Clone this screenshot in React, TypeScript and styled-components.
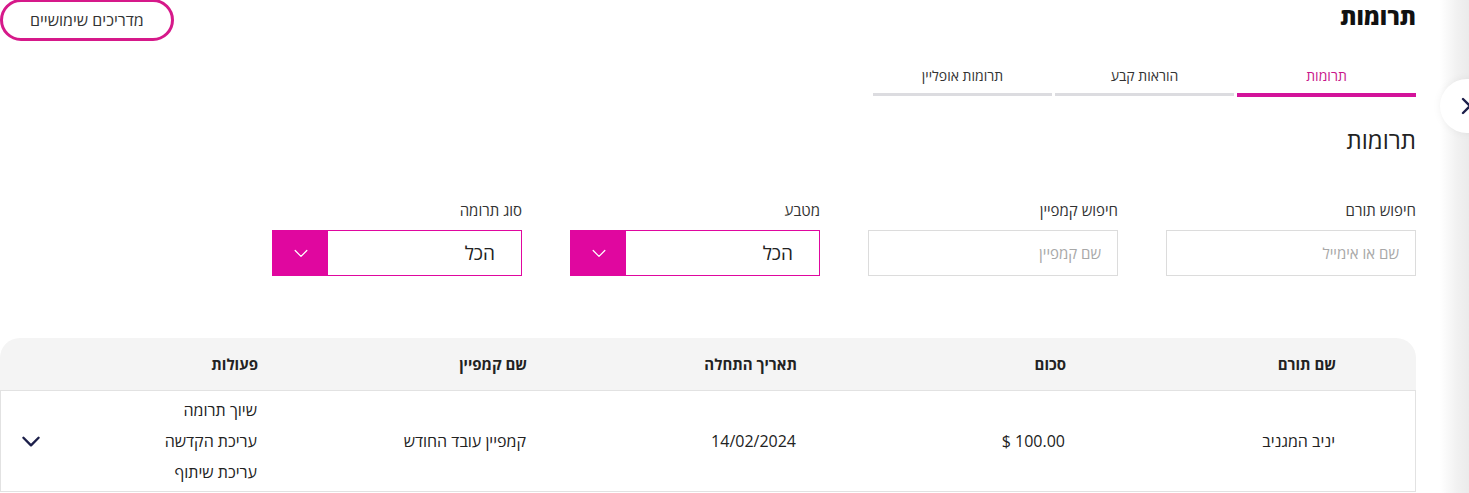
import React from "react";
import styled, { createGlobalStyle } from "styled-components";

const GlobalStyle = createGlobalStyle`
  body {
    margin: 0;
    background: #fff;
    font-family: "Open Sans", "Liberation Sans", "DejaVu Sans", sans-serif;
    color: #222;
  }
`;

const MAGENTA = "#e0079f";

const Page = styled.div`
  display: flex;
  direction: ltr;
  width: 1469px;
  height: 493px;
  overflow: hidden;
  position: relative;
`;

const Main = styled.main`
  direction: rtl;
  width: 1416px;
  margin-right: 24px;
  flex-shrink: 0;
`;

const SideEdge = styled.aside`
  flex: 1;
  background: linear-gradient(to right, #ffffff 0%, #f1f1f1 60%, #ebebeb 100%);
`;

const ToggleButton = styled.button`
  position: absolute;
  top: 79px;
  left: 1440px;
  width: 54px;
  height: 54px;
  border-radius: 50%;
  border: none;
  background: #fff;
  box-shadow: 0 0 8px rgba(0, 0, 0, 0.06);
  display: flex;
  align-items: center;
  padding: 0 0 0 20px;
  color: #1c1f4a;
`;

const Header = styled.header`
  display: flex;
  justify-content: space-between;
  align-items: flex-start;
  height: 42px;
`;

const Title = styled.h1`
  margin: 0;
  font-size: 23px;
  font-weight: 800;
  color: #111;
`;

const GuideButton = styled.button`
  height: 42px;
  margin-top: -1px;
  padding: 0 27px;
  border: 3px solid #d6198a;
  border-radius: 22px;
  background: #fff;
  font-family: inherit;
  font-size: 16px;
  color: #333;
`;

const Tabs = styled.nav`
  display: flex;
  gap: 3px;
  margin-top: 24px;
`;

const Tab = styled.div<{ $active?: boolean }>`
  width: 179px;
  text-align: center;
  font-size: 14px;
  padding-bottom: 8px;
  color: ${(p) => (p.$active ? "#c8168a" : "#333")};
  border-bottom: ${(p) => (p.$active ? `4px solid #d3139a` : "3px solid #dcdce0")};
  margin-bottom: ${(p) => (p.$active ? "0" : "1px")};
`;

const SubTitle = styled.h2`
  margin: 26px 0 0;
  font-size: 24px;
  font-weight: 400;
  color: #222;
`;

const Filters = styled.div`
  display: flex;
  gap: 48px;
  margin-top: 44px;
`;

const Field = styled.label`
  width: 250px;
  display: flex;
  flex-direction: column;
  gap: 10px;
  font-size: 15px;
  color: #333;
`;

const TextInput = styled.input`
  box-sizing: border-box;
  height: 46px;
  border: 1px solid #dcdcdc;
  padding: 0 16px;
  font-family: inherit;
  font-size: 15px;
  direction: rtl;
  &::placeholder {
    color: #a8a8a8;
  }
`;

const Select = styled.div`
  box-sizing: border-box;
  height: 46px;
  border: 1px solid ${MAGENTA};
  display: flex;
  align-items: stretch;
`;

const SelectValue = styled.span`
  flex: 1;
  display: flex;
  align-items: center;
  padding-right: 26px;
  font-size: 19px;
  color: #222;
`;

const SelectArrow = styled.span`
  width: 55px;
  background: ${MAGENTA};
  display: flex;
  align-items: center;
  justify-content: center;
`;

const Table = styled.div`
  margin-top: 62px;
`;

const cols = "80px 270px 269px 270px 269px 1fr 60px";

const HeadRow = styled.div`
  display: grid;
  grid-template-columns: ${cols};
  height: 52px;
  align-items: center;
  background: #f4f4f4;
  border-radius: 20px 20px 0 0;
  font-size: 15px;
  font-weight: 700;
  color: #222;
`;

const BodyRow = styled.div`
  display: grid;
  grid-template-columns: ${cols};
  height: 102px;
  box-sizing: border-box;
  align-items: center;
  border: 1px solid #e2e2e2;
  font-size: 16px;
  color: #222;
`;

const Cell = styled.div`
  text-align: right;
`;

const Actions = styled.div`
  display: flex;
  flex-direction: column;
  gap: 9px;
  line-height: 22px;
`;

const ExpandCell = styled.div`
  display: flex;
  justify-content: flex-end;
  padding-left: 17px;
  color: #1c1f4a;
`;

const Chevron = ({ size, color, stroke }: { size: number; color: string; stroke: number }) => (
  <svg width={size} height={size} viewBox="0 0 24 24" fill="none">
    <path d="M5 9l7 7 7-7" stroke={color} strokeWidth={stroke} strokeLinecap="round" strokeLinejoin="round" />
  </svg>
);

const SelectField = ({ label }: { label: string }) => (
  <Field as="div">
    {label}
    <Select>
      <SelectValue>הכל</SelectValue>
      <SelectArrow>
        <Chevron size={20} color="#fff" stroke={1.5} />
      </SelectArrow>
    </Select>
  </Field>
);

export default function App() {
  return (
    <>
      <GlobalStyle />
      <Page>
        <Main>
          <Header>
            <Title>תרומות</Title>
            <GuideButton>מדריכים שימושיים</GuideButton>
          </Header>
          <Tabs>
            <Tab $active>תרומות</Tab>
            <Tab>הוראות קבע</Tab>
            <Tab>תרומות אופליין</Tab>
          </Tabs>
          <SubTitle>תרומות</SubTitle>
          <Filters>
            <Field>
              חיפוש תורם
              <TextInput placeholder="שם או אימייל" />
            </Field>
            <Field>
              חיפוש קמפיין
              <TextInput placeholder="שם קמפיין" />
            </Field>
            <SelectField label="מטבע" />
            <SelectField label="סוג תרומה" />
          </Filters>
          <Table>
            <HeadRow>
              <span />
              <Cell>שם תורם</Cell>
              <Cell>סכום</Cell>
              <Cell>תאריך התחלה</Cell>
              <Cell>שם קמפיין</Cell>
              <Cell>פעולות</Cell>
              <span />
            </HeadRow>
            <BodyRow>
              <span />
              <Cell>יניב המגניב</Cell>
              <Cell>
                <bdi dir="ltr">$ 100.00</bdi>
              </Cell>
              <Cell>14/02/2024</Cell>
              <Cell>קמפיין עובד החודש</Cell>
              <Cell as={Actions}>
                <span>שיוך תרומה</span>
                <span>עריכת הקדשה</span>
                <span>עריכת שיתוף</span>
              </Cell>
              <ExpandCell>
                <Chevron size={26} color="#1c1f4a" stroke={2.2} />
              </ExpandCell>
            </BodyRow>
          </Table>
        </Main>
        <SideEdge />
        <ToggleButton aria-label="toggle">
          <svg width="14" height="20" viewBox="0 0 14 20" fill="none">
            <path d="M3 3l7 7-7 7" stroke="#1c1f4a" strokeWidth="2.4" strokeLinecap="round" strokeLinejoin="round" />
          </svg>
        </ToggleButton>
      </Page>
    </>
  );
}
